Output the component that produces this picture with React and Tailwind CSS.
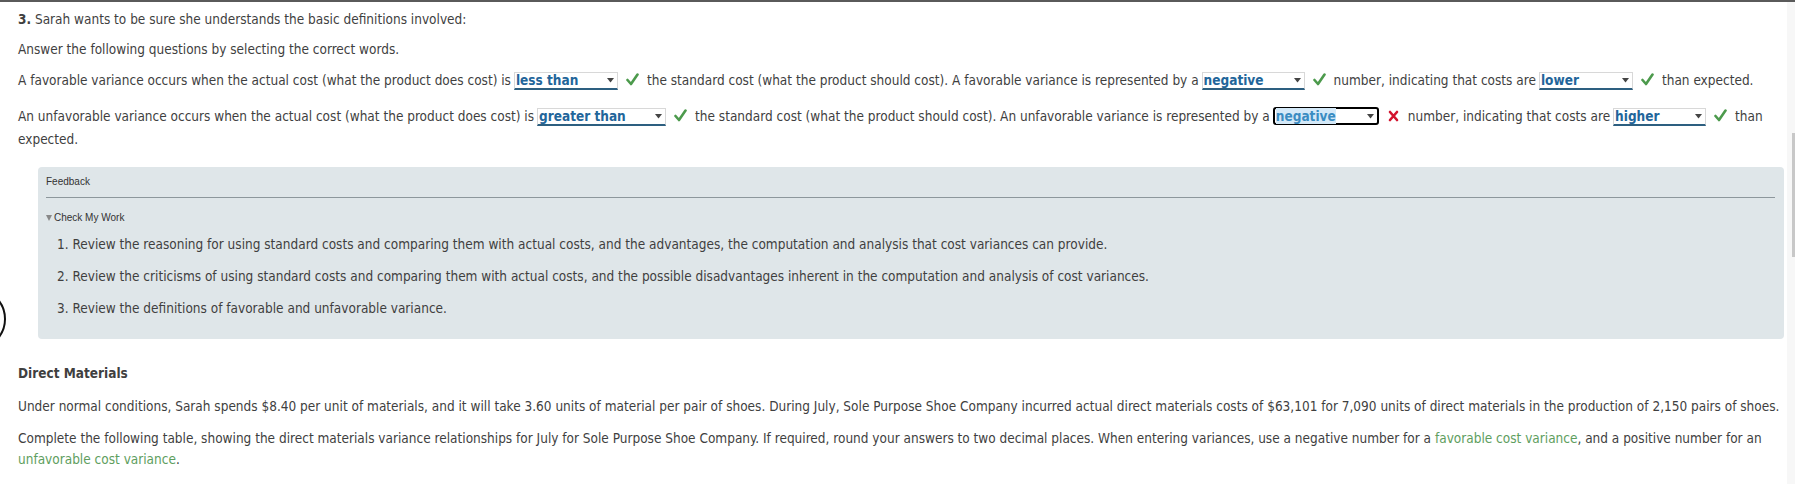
import React from 'react';

const Check = () => (
  <svg width="13" height="13" viewBox="0 0 13 13" className="inline-block align-[-1px] mx-[8px]">
    <path d="M1.5 7 L5 11 L11.5 1.5" fill="none" stroke="#4c9a4c" strokeWidth="2.6" strokeLinecap="round" strokeLinejoin="round" />
  </svg>
);

const Cross = () => (
  <svg width="11" height="12" viewBox="0 0 11 12" className="inline-block align-[-1px] mx-[9px]">
    <path d="M2 2 L9 10 M9 2 L2 10" fill="none" stroke="#d3142e" strokeWidth="2.6" strokeLinecap="round" />
  </svg>
);

// looks like the native select used on the page
const Dropdown = ({ value, width, focused }) => (
  <span
    className={
      focused
        ? 'relative inline-block leading-[14px] ml-[3px] rounded-[3px] border-2 border-black bg-white pl-[1px]'
        : 'relative inline-block leading-[15px] ml-[3px] border border-[#d8d8d8] border-b-2 border-b-[#2d5f80] bg-white pl-[1px]'
    }
    style={{ width }}
  >
    <span
      className={
        focused
          ? 'font-bold text-[#3a8cc2] bg-[#d4e9f8]'
          : 'font-bold text-[#22659a]'
      }
    >
      {value}
    </span>
    <svg width="7" height="5" viewBox="0 0 7 5" className="absolute right-[3px] top-[5px]">
      <path d="M0 0 H7 L3.5 4.5 Z" fill="#444" />
    </svg>
  </span>
);

const App = () => {
  return (
    <div
      className="relative w-[1795px] h-[484px] overflow-hidden bg-white border-t-2 border-[#5a5a5a] text-[13.5px] text-[#3f3f3f]"
      style={{ fontFamily: "Tahoma, 'DejaVu Sans Condensed', 'DejaVu Sans', Verdana, sans-serif" }}
    >
      {/* circle at left edge */}
      <svg width="8" height="40" viewBox="0 0 8 40" className="absolute left-0 top-[297px]">
        <circle cx="-25" cy="20" r="30" fill="none" stroke="#111" strokeWidth="2" />
      </svg>
      {/* scrollbar */}
      <div className="absolute right-0 top-0 h-full w-[8px] bg-[#f7f7f7]">
        <div className="absolute right-0 top-[131px] h-[124px] w-[3px] bg-[#c8c8c8]" />
      </div>

      <div className="pt-[7px] pl-[18px] pr-[11px]">
        <p className="leading-[21px] mb-[9px]">
          <span className="font-bold">3.</span> Sarah wants to be sure she understands the basic definitions involved:
        </p>
        <p className="leading-[21px] mb-[9px]">Answer the following questions by selecting the correct words.</p>
        <p className="leading-[23px] mb-[13px]">
          A favorable variance occurs when the actual cost (what the product does cost) is
          <Dropdown value="less than" width={104} />
          <Check />
          the standard cost (what the product should cost). A favorable variance is represented by a
          <Dropdown value="negative" width={103} />
          <Check />
          number, indicating that costs are
          <Dropdown value="lower" width={94} />
          <Check />
          than expected.
        </p>
        <p className="leading-[23px] mb-[16px]">
          An unfavorable variance occurs when the actual cost (what the product does cost) is
          <Dropdown value="greater than" width={129} />
          <Check />
          the standard cost (what the product should cost). An unfavorable variance is represented by a
          <Dropdown value="negative" width={106} focused />
          <Cross />
          number, indicating that costs are
          <Dropdown value="higher" width={93} />
          <Check />
          than expected.
        </p>

        <div className="ml-[20px] h-[172px] rounded-[4px] bg-[#dfe6e9] pt-[8px] pl-[8px] pr-[9px]">
          <div className="text-[10px] text-[#333] leading-[14px] pb-[8px] border-b border-[#8d979c]" style={{ fontFamily: "'Liberation Sans', Arial, sans-serif" }}>
            Feedback
          </div>
          <div className="flex items-center mt-[13px] text-[10px] leading-[14px] text-[#333]" style={{ fontFamily: "'Liberation Sans', Arial, sans-serif" }}>
            <svg width="6" height="6" viewBox="0 0 6 6" className="mr-[2px]">
              <path d="M0 0 H6 L3 6 Z" fill="#888" />
            </svg>
            Check My Work
          </div>
          <ol className="pl-[11px] mt-[9px]">
            <li className="leading-[21px] mb-[11px]">1. Review the reasoning for using standard costs and comparing them with actual costs, and the advantages, the computation and analysis that cost variances can provide.</li>
            <li className="leading-[21px] mb-[11px]">2. Review the criticisms of using standard costs and comparing them with actual costs, and the possible disadvantages inherent in the computation and analysis of cost variances.</li>
            <li className="leading-[21px]">3. Review the definitions of favorable and unfavorable variance.</li>
          </ol>
        </div>

        <p className="font-bold leading-[21px] mt-[24px] mb-[12px]">Direct Materials</p>
        <p className="leading-[21px] mb-[11px]">
          Under normal conditions, Sarah spends $8.40 per unit of materials, and it will take 3.60 units of material per pair of shoes. During July, Sole Purpose Shoe Company incurred actual direct materials costs of $63,101 for 7,090 units of direct materials in the production of 2,150 pairs of shoes.
        </p>
        <p className="leading-[21px]">
          Complete the following table, showing the direct materials variance relationships for July for Sole Purpose Shoe Company. If required, round your answers to two decimal places. When entering variances, use a negative number for a{' '}
          <span className="text-[#5e9e5e]">favorable cost variance</span>, and a positive number for an{' '}
          <span className="text-[#5e9e5e]">unfavorable cost variance</span>.
        </p>
      </div>
    </div>
  );
};

export default App;
